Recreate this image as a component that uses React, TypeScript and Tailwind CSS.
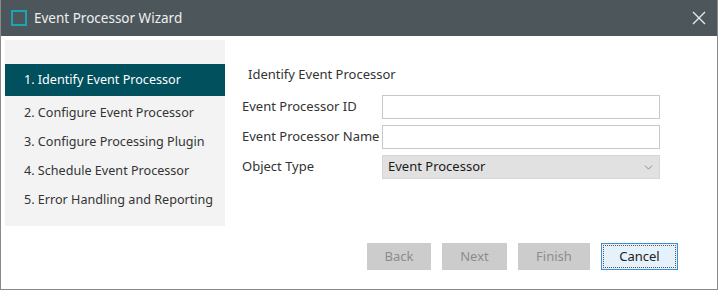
import { ChevronDown } from 'lucide-react'

const steps = [
  '1. Identify Event Processor',
  '2. Configure Event Processor',
  '3. Configure Processing Plugin',
  '4. Schedule Event Processor',
  '5. Error Handling and Reporting',
]

export default function App() {
  return (
    <div className="w-[718px] h-[290px] flex flex-col bg-white border border-t-0 border-[#8a8a8a] text-[13px] text-[#222] font-['Noto_Sans',sans-serif] whitespace-nowrap overflow-hidden">
      {/* Title bar */}
      <div className="h-[36px] shrink-0 bg-[#4d565b] flex items-center pl-[11px] pr-[12px] -mx-px">
        <div className="w-[16px] h-[16px] border-2 border-[#1ba4b6]" />
        <span className="ml-[7px] text-[13.5px] text-[#eef0f0]">Event Processor Wizard</span>
        <svg className="ml-auto" width="14" height="14" viewBox="0 0 14 14">
          <path d="M1 1 L13 13 M13 1 L1 13" stroke="#e8e8e8" strokeWidth="1.4" />
        </svg>
      </div>

      <div className="flex flex-1">
        {/* Steps */}
        <div className="ml-[4px] mt-[4px] w-[220px] h-[186px] bg-[#f3f3f3] pt-[24px] text-[12.6px]">
          {steps.map((s, i) => (
            <div
              key={s}
              className={
                i === 0
                  ? 'h-[32px] mb-[3px] flex items-center pl-[19px] bg-[#00505e] text-white'
                  : 'h-[29px] flex items-center pl-[19px] text-[#333]'
              }
            >
              {s}
            </div>
          ))}
        </div>

        {/* Form */}
        <div className="flex-1 flex flex-col pl-[17px] pr-[57px]">
          <div className="mt-[29px] ml-[6px] h-[20px] flex items-center text-[#333]">Identify Event Processor</div>
          <div className="mt-[10px] flex flex-col gap-[6px]">
            <div className="flex items-center">
              <span className="w-[140px] text-[#333]">Event Processor ID</span>
              <input className="flex-1 h-[24px] border border-[#c8c8c8] bg-white outline-none" />
            </div>
            <div className="flex items-center">
              <span className="w-[140px] text-[#333]">Event Processor Name</span>
              <input className="flex-1 h-[24px] border border-[#c8c8c8] bg-white outline-none" />
            </div>
            <div className="flex items-center">
              <span className="w-[140px] text-[#333]">Object Type</span>
              <div className="flex-1 h-[24px] bg-[#e1e1e1] border border-[#d6d6d6] flex items-center pl-[5px] pr-[4px] text-[#1a1a1a]">
                Event Processor
                <ChevronDown className="ml-auto text-[#777]" size={13} strokeWidth={1.5} />
              </div>
            </div>
          </div>

          <div className="mt-auto mb-[19px] flex justify-end gap-[11px] -mr-[18px]">
            <button className="w-[64px] h-[27px] bg-[#cccccc] text-[#8c8c8c]">Back</button>
            <button className="w-[65px] h-[27px] bg-[#cccccc] text-[#8c8c8c]">Next</button>
            <button className="w-[72px] h-[27px] bg-[#cccccc] text-[#8c8c8c]">Finish</button>
            <button className="w-[77px] h-[27px] bg-[#e5f1fb] border border-[#3b8fd9] p-[1px] text-[#222]">
              <span className="w-full h-full flex items-center justify-center border border-dotted border-[#555]">Cancel</span>
            </button>
          </div>
        </div>
      </div>
    </div>
  )
}
